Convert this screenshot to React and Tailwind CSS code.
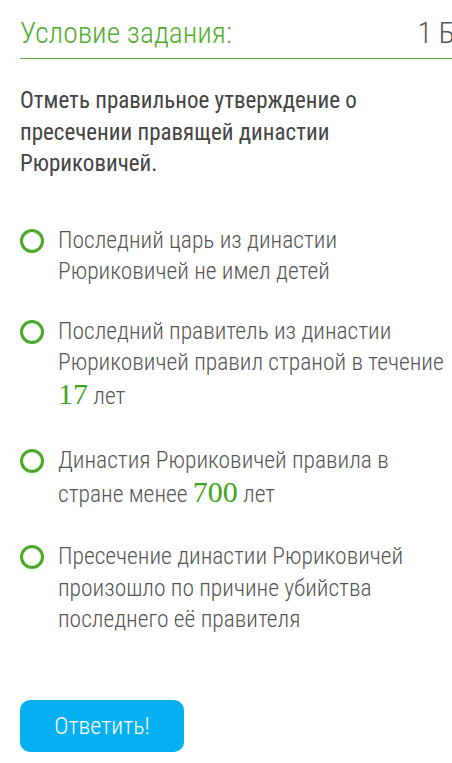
const options = [
  { id: 1, gap: 'mt-0', parts: ['Последний царь из династии Рюриковичей не имел детей'] },
  { id: 2, gap: 'mt-[28px]', parts: ['Последний правитель из династии Рюриковичей правил страной в течение ', { num: '17' }, ' лет'] },
  { id: 3, gap: 'mt-[33px]', parts: ['Династия Рюриковичей правила в стране менее ', { num: '700' }, ' лет'] },
  { id: 4, gap: 'mt-[31px]', parts: ['Пресечение династии Рюриковичей произошло по причине убийства последнего её правителя'] },
];

const font = "font-['Roboto_Condensed','Liberation_Sans_Narrow','DejaVu_Sans_Condensed',Roboto,sans-serif]";

function Option({ parts, gap }) {
  return (
    <label className={`flex items-start gap-[14px] cursor-pointer ${gap}`}>
      <span className="mt-[4px] w-[24px] h-[24px] shrink-0 rounded-full border-[3px] border-[#4aa928]" />
      <span className="text-[23.5px] leading-[31.5px] font-light text-[#555]">
        {parts.map((p, i) =>
          typeof p === 'string' ? (
            <span key={i}>{p}</span>
          ) : (
            <span key={i} className="font-['Liberation_Serif',serif] font-normal text-[30px] leading-none text-[#3fa51e]">
              {p.num}
            </span>
          )
        )}
      </span>
    </label>
  );
}

export default function App() {
  return (
    <div className={`w-[452px] h-[763px] overflow-hidden bg-white ${font}`}>
      <div className="pl-[20px] pt-[13px]">
        <div className="flex items-center justify-between h-[40px] overflow-hidden">
          <h2 className="text-[29.5px] font-light text-[#52ae2f] whitespace-nowrap">Условие задания:</h2>
          <span className="text-[29.5px] font-light text-[#555] whitespace-nowrap mr-[-10px]">1 Б.</span>
        </div>
        <div className="h-px bg-[#5cb336] mt-[5px]" />
      </div>

      <div className="pl-[20px]">
        <p className="mt-[26px] pr-[20px] text-[23px] leading-[31.5px] text-[#444]">
          Отметь правильное утверждение о пресечении правящей династии Рюриковичей.
        </p>

        <div className="mt-[45px] flex flex-col">
          {options.map((o) => (
            <Option key={o.id} parts={o.parts} gap={o.gap} />
          ))}
        </div>

        <button className="mt-[64px] w-[164px] h-[52px] rounded-[10px] bg-[#06b0f0] text-white text-[24px] font-light">
          Ответить!
        </button>
      </div>
    </div>
  );
}
